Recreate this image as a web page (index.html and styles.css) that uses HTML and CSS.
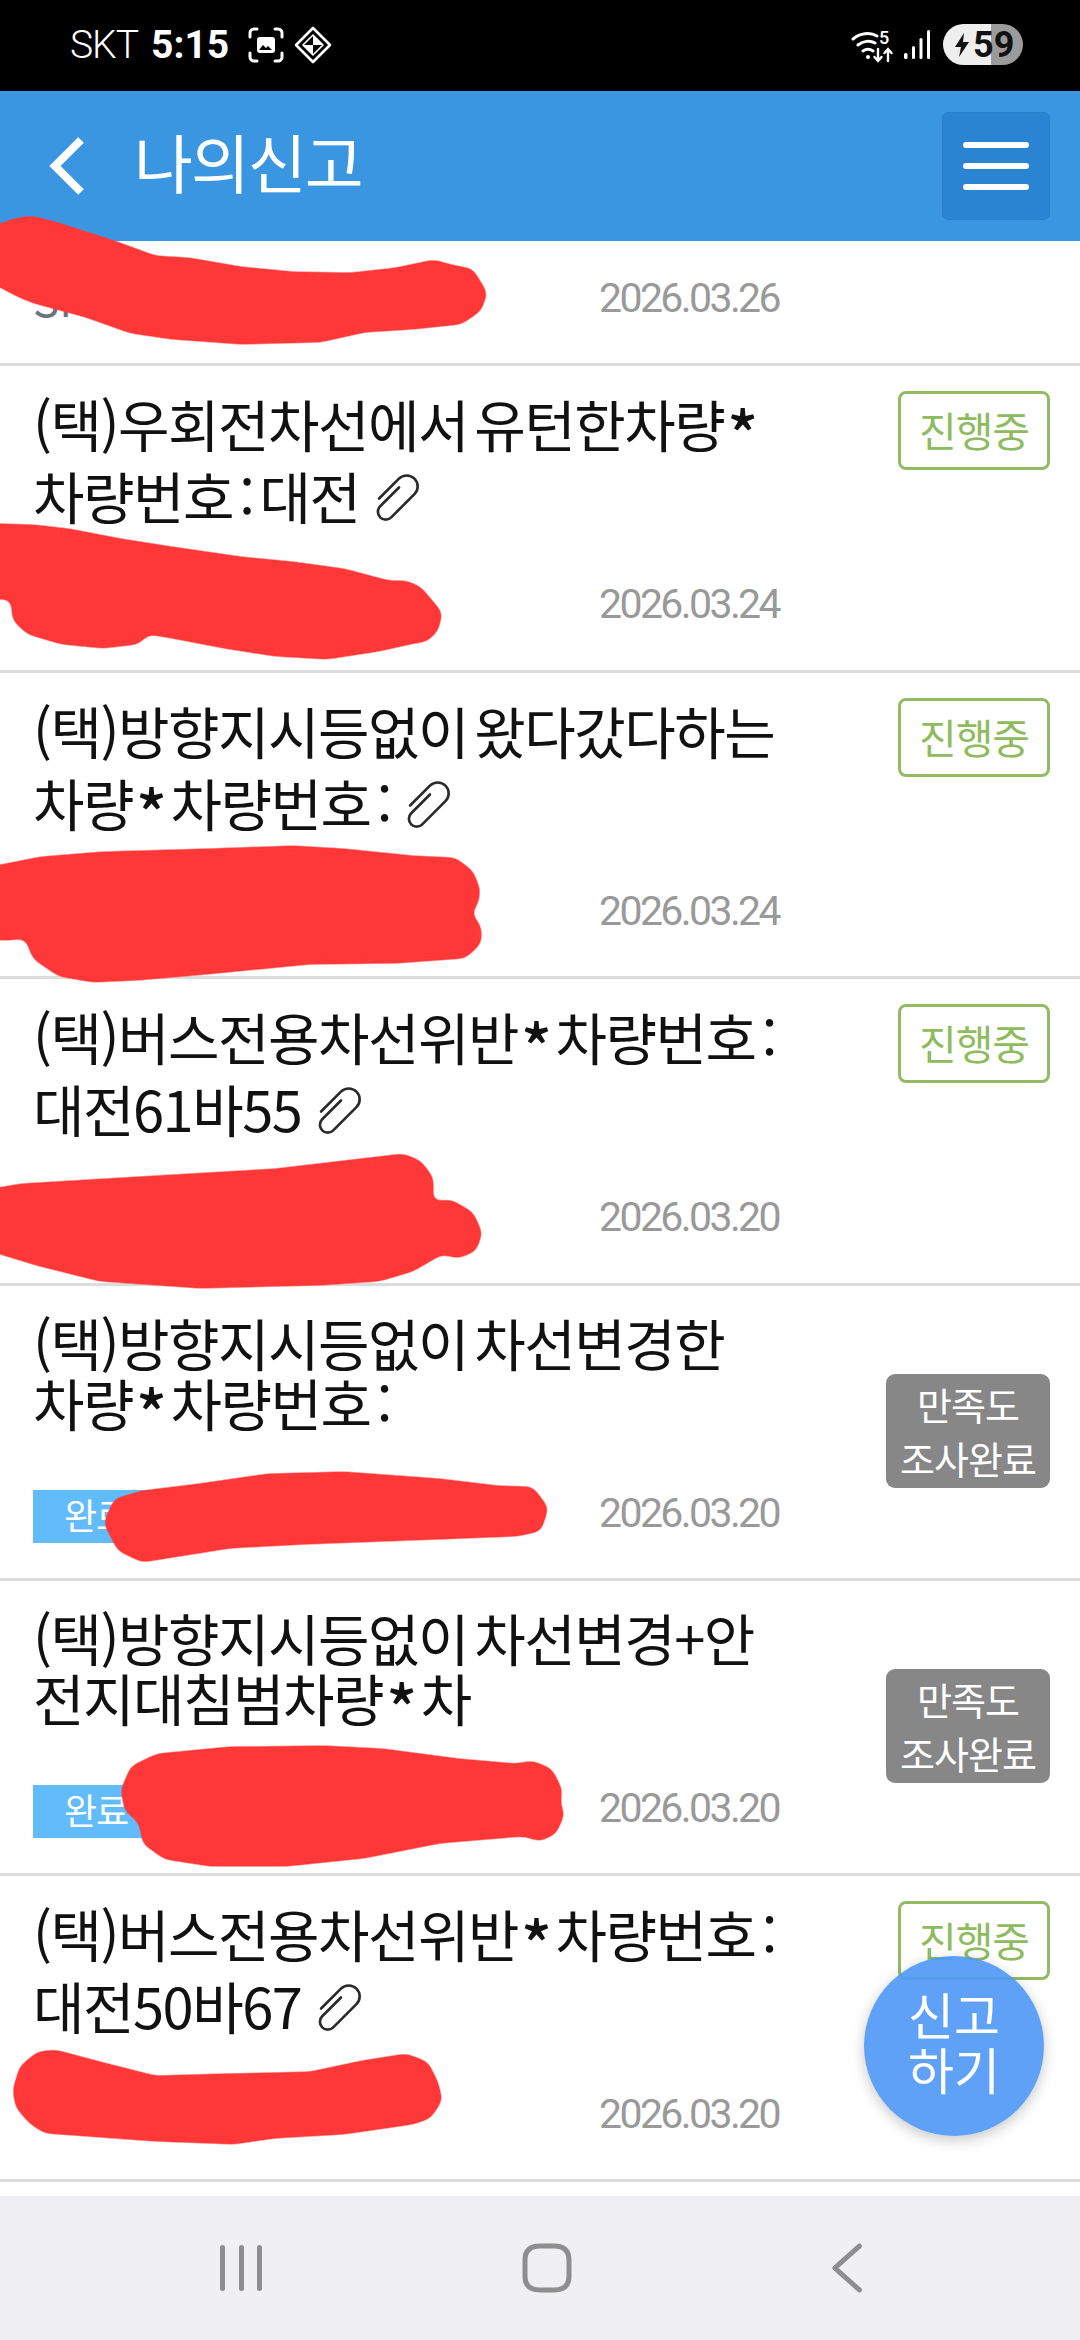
FILE: index.html
```html
<!DOCTYPE html>
<html lang="ko">
<head>
  <meta charset="UTF-8">
  <meta name="viewport" content="width=device-width, initial-scale=1.0">
  <title>나의신고</title>
  <link rel="stylesheet" href="styles.css">
</head>
<body>
  <svg class="sprite" width="0" height="0">
    <symbol id="clip" viewBox="-16 -16 32 32">
      <path transform="rotate(45)" d="M-2.5-7V10a5 5 0 0 0 10 0V-11a7 7 0 0 0-14 0V7" fill="none" stroke="#2a2a2a" stroke-width="1.7" stroke-linecap="round"/>
    </symbol>
  </svg>

  <div class="page">
    <!-- Status bar -->
    <div class="status-bar">
      <div class="status-left">
        <span class="carrier">SKT</span>
        <span class="clock">5:15</span>
        <svg class="status-icon" width="36" height="36" viewBox="0 0 36 36" fill="none" stroke="#fff" stroke-width="3" stroke-linecap="round">
          <path d="M2 10V6a4 4 0 0 1 4-4h3M27 2h3a4 4 0 0 1 4 4v4M34 26v4a4 4 0 0 1-4 4h-3M9 34H6a4 4 0 0 1-4-4v-4"/>
          <rect x="9" y="10" width="18" height="16" rx="3" fill="#fff" stroke="none"/>
          <path d="M11 23l4-5 3 3 2-2 4 4z" fill="#000" stroke="none"/>
        </svg>
        <svg class="status-icon" width="38" height="38" viewBox="0 0 38 38" fill="none" stroke="#fff" stroke-width="2.6" stroke-linejoin="round">
          <path d="M19 2l17 17-17 17L2 19z"/>
          <path d="M19 9l10 10-10 10L9 19z" stroke-width="1.6"/>
          <path d="M19 9v10h10zM19 29V19H9z" fill="#fff" stroke="none"/>
        </svg>
      </div>
      <div class="status-right">
        <svg class="wifi" width="44" height="36" viewBox="0 0 44 36" fill="none" stroke="#fff" stroke-width="3" stroke-linecap="round">
          <path d="M2 12c7-6 17-7 24-3M7 18c5-4 12-5 17-2M12 24c3-2 7-2 10 0"/>
          <circle cx="17" cy="30" r="2" fill="#fff" stroke="none"/>
          <path d="M27 22v12M23.500 30l3.500 4 3.500-4M37 34V22M33.500 26l3.500-4 3.500 4" stroke-width="2.400"/>
          <text x="28" y="17" class="wifi-num">5</text>
        </svg>
        <svg width="28" height="30" viewBox="0 0 28 30" fill="#fff">
          <rect x="1" y="23" width="3.500" height="6" rx="1.500"/>
          <rect x="9" y="16" width="3" height="13" rx="1.500"/>
          <rect x="16.500" y="8" width="3" height="21" rx="1.500"/>
          <rect x="24" y="0" width="3" height="29" rx="1.500"/>
        </svg>
        <div class="battery">
          <svg width="16" height="26" viewBox="0 0 16 26"><path d="M10 1L1 15h6l-2 10 10-15H9z" fill="#111"/></svg>
          <span>59</span>
        </div>
      </div>
    </div>

    <!-- Title bar -->
    <header class="app-bar">
      <svg class="back-icon" width="36" height="58" viewBox="0 0 36 58" fill="none" stroke="#fff" stroke-width="8">
        <path d="M32 3L6 29l26 26"/>
      </svg>
      <h1>나의신고</h1>
      <button class="menu-btn" type="button"><i></i><i></i><i></i></button>
    </header>

    <!-- Report list -->
    <ul class="report-list">
      <li class="report cut-off">
        <div class="report-main">
          <div class="meta">
            <span class="sub-text">SI</span>
            <span class="date">2026.03.26</span>
          </div>
        </div>
      </li>
      <li class="report attached">
        <div class="report-main">
          <p class="report-title">(택)우회전차선에서 유턴한차량<span class="star">*</span><br>차량번호 : 대전 <svg class="clip-icon"><use href="#clip"/></svg></p>
          <div class="meta"><span class="date">2026.03.24</span></div>
        </div>
        <span class="badge badge-progress">진행중</span>
      </li>
      <li class="report attached">
        <div class="report-main">
          <p class="report-title">(택)방향지시등없이 왔다갔다하는<br>차량<span class="star">*</span>차량번호 : <svg class="clip-icon"><use href="#clip"/></svg></p>
          <div class="meta"><span class="date">2026.03.24</span></div>
        </div>
        <span class="badge badge-progress">진행중</span>
      </li>
      <li class="report attached">
        <div class="report-main">
          <p class="report-title">(택)버스전용차선위반<span class="star">*</span>차량번호 :<br>대전61바55 <svg class="clip-icon"><use href="#clip"/></svg></p>
          <div class="meta"><span class="date">2026.03.20</span></div>
        </div>
        <span class="badge badge-progress">진행중</span>
      </li>
      <li class="report done">
        <div class="report-main">
          <p class="report-title">(택)방향지시등없이 차선변경한<br>차량<span class="star">*</span>차량번호 :</p>
          <div class="meta"><span class="tag">완료</span><span class="date">2026.03.20</span></div>
        </div>
        <span class="badge badge-survey">만족도<br>조사완료</span>
      </li>
      <li class="report done">
        <div class="report-main">
          <p class="report-title">(택)방향지시등없이 차선변경+안<br>전지대침범차량<span class="star">*</span>차</p>
          <div class="meta"><span class="tag">완료</span><span class="date">2026.03.20</span></div>
        </div>
        <span class="badge badge-survey">만족도<br>조사완료</span>
      </li>
      <li class="report attached">
        <div class="report-main">
          <p class="report-title">(택)버스전용차선위반<span class="star">*</span>차량번호 :<br>대전50바67 <svg class="clip-icon"><use href="#clip"/></svg></p>
          <div class="meta"><span class="date">2026.03.20</span></div>
        </div>
        <span class="badge badge-progress">진행중</span>
      </li>
    </ul>

    <!-- Android nav -->
    <nav class="nav-bar">
      <svg width="44" height="50" viewBox="0 0 44 50" fill="#8e8e8e">
        <rect x="1" y="2" width="5" height="46" rx="2.500"/>
        <rect x="20" y="2" width="5" height="46" rx="2.500"/>
        <rect x="38" y="2" width="5" height="46" rx="2.500"/>
      </svg>
      <svg width="50" height="50" viewBox="0 0 50 50" fill="none" stroke="#8e8e8e" stroke-width="5">
        <path d="M18 3h14c10 0 15 5 15 14v16c0 9-5 14-15 14H18C8 47 3 42 3 33V17C3 8 8 3 18 3z"/>
      </svg>
      <svg width="34" height="50" viewBox="0 0 34 50" fill="none" stroke="#8e8e8e" stroke-width="5" stroke-linecap="round" stroke-linejoin="round">
        <path d="M30 3L4 25l26 22" transform="matrix(.95 0 0 1 1 0)"/>
      </svg>
    </nav>

    <a class="fab">신고<br>하기</a>

    <!-- Red marker drawn over the screenshot, coordinates in the 1080 wide frame -->
    <svg class="marker" width="1080" height="2340" viewBox="0 0 1080 2340">
      <filter id="soft" filterUnits="userSpaceOnUse" x="-60" y="0" width="1200" height="2340">
        <feGaussianBlur stdDeviation="5"/>
        <feComponentTransfer>
          <feFuncA type="linear" slope="8" intercept="-3.5"/>
        </feComponentTransfer>
      </filter>
      <g fill="#fe3737" stroke="#fe3737" stroke-width="3" stroke-linejoin="round" filter="url(#soft)">
        <polygon points="-30,236 14,220 31,217 55,223 114,242 155,257 189,259 241,268 293,273 351,274 396,269 434,261 451,266 472,270 486,293 480,310 461,323 413,328 365,331 320,341 241,343 172,338 131,332 86,316 34,302 17,295 -30,270"/>
        <polygon points="-30,524 34,526 69,530 121,540 172,548 241,558 293,563 344,570 389,582 406,582 420,588 441,613 437,630 427,640 410,643 379,650 327,658 275,655 224,647 172,637 148,633 138,643 103,647 62,643 28,633 14,620 12,598 -30,598"/>
        <polygon points="-30,872 41,858 103,853 207,850 293,847 344,850 413,857 455,859 472,872 479,890 477,903 470,913 480,927 480,943 465,957 396,962 310,963 207,973 138,979 93,981 59,975 34,958 26,937 10,939 -30,938"/>
        <polygon points="-30,1194 21,1185 138,1178 275,1170 403,1155 420,1162 432,1178 432,1197 427,1203 451,1201 472,1213 481,1233 475,1250 458,1257 442,1253 413,1270 379,1280 320,1284 200,1287 100,1280 40,1265 -30,1244"/>
        <polygon points="105,1523 115,1500 142,1492 199,1485 268,1475 344,1473 440,1480 498,1487 532,1488 547,1508 540,1530 517,1535 440,1538 306,1543 230,1547 142,1561 119,1550"/>
        <polygon points="122,1790 132,1767 157,1755 230,1748 325,1747 383,1750 459,1760 517,1765 532,1762 551,1770 561,1790 559,1802 563,1815 555,1833 540,1840 524,1835 440,1842 364,1857 287,1865 210,1865 165,1858 144,1843 140,1822 126,1810"/>
        <polygon points="14,2090 21,2067 38,2053 55,2051 100,2063 155,2077 224,2075 310,2073 362,2062 406,2055 427,2063 437,2083 441,2100 430,2117 413,2123 344,2133 275,2137 234,2143 155,2140 45,2132 31,2123 17,2107"/>
      </g>
    </svg>
  </div>
</body>
</html>
```

FILE: styles.css
```css
* {
  box-sizing: border-box;
}

html,
body {
  margin: 0;
  padding: 0;
  background-color: #fff;
}

body {
  font-family: "Noto Sans CJK KR", "Noto Sans", sans-serif;
}

.sprite {
  display: block;
}

.page {
  position: relative;
  width: 1080px;
  height: 2340px;
  display: flex;
  flex-direction: column;
  overflow: hidden;
}

/* Status bar */
.status-bar {
  height: 91px;
  background-color: #000;
  color: #fff;
  display: flex;
  justify-content: space-between;
  align-items: center;
  padding: 0 57px 2px 70px;
  flex-shrink: 0;
}

.status-left,
.status-right {
  display: flex;
  align-items: center;
}

.carrier {
  font-family: Roboto, sans-serif;
  font-weight: 300;
  font-size: 39px;
  letter-spacing: -1px;
  margin-right: 13px;
}

.clock {
  font-family: Roboto, sans-serif;
  font-weight: 700;
  font-size: 39px;
  margin-right: 19px;
}

.status-icon {
  margin-right: 10px;
}

.status-right {
  gap: 10px;
}

.wifi {
  margin-right: -2px;
}

.wifi-num {
  font-family: Roboto, sans-serif;
  font-size: 18px;
  font-weight: 500;
  fill: #fff;
  stroke: none;
}

.battery {
  width: 80px;
  height: 41px;
  border-radius: 21px;
  background: linear-gradient(to right, #eeeeee 60%, #9b9b9b 60%);
  color: #111;
  display: flex;
  align-items: center;
  padding-left: 11px;
  gap: 3px;
  font-family: Roboto, sans-serif;
  font-weight: 700;
  font-size: 36px;
  margin-left: 2px;
}

/* Title bar */
.app-bar {
  height: 150px;
  background-color: #3a96e0;
  display: flex;
  align-items: center;
  padding: 0 30px 0 49px;
  flex-shrink: 0;
}

.app-bar h1 {
  margin: 0 0 12px 49px;
  font-size: 64px;
  font-weight: 400;
  line-height: 80px;
  color: #fff;
  letter-spacing: -2px;
  flex: 1;
}

.menu-btn {
  width: 108px;
  height: 108px;
  border: 1px solid #2c80cb;
  border-radius: 6px;
  background-color: #2a84d2;
  display: flex;
  flex-direction: column;
  justify-content: center;
  align-items: center;
  gap: 15px;
  padding: 0;
}

.menu-btn i {
  display: block;
  width: 66px;
  height: 6px;
  border-radius: 3px;
  background-color: #fff;
}

/* Report list */
.report-list {
  list-style: none;
  margin: 0;
  padding: 0;
  flex: 1;
}

.report {
  display: flex;
  justify-content: space-between;
  align-items: flex-start;
  border-bottom: 3px solid #dcdcdc;
  padding: 0 30px 0 33px;
}

.report-main {
  flex: 1;
}

.attached {
  height: 306.500px;
  padding-top: 21px;
}

.done {
  height: 295px;
  padding-top: 26px;
}

.cut-off {
  height: 125px;
}

.report-title {
  margin: 0;
  font-size: 56px;
  letter-spacing: -1.500px;
  word-spacing: -8px;
  color: #111;
  white-space: nowrap;
}

.attached .report-title {
  line-height: 72px;
}

.done .report-title {
  line-height: 60px;
}

.star {
  font-size: 64px;
  font-weight: 500;
  line-height: 0;
  vertical-align: -12px;
  margin: 0 5px 0 3px;
}

.clip-icon {
  width: 50px;
  height: 50px;
  margin-left: 3px;
  vertical-align: -4px;
}

.meta {
  display: flex;
  align-items: center;
  justify-content: space-between;
  width: 746px;
  height: 54px;
}

.attached .meta {
  margin-top: 46px;
  justify-content: flex-end;
}

.done .meta {
  margin-top: 58px;
}

.cut-off .meta {
  margin-top: 30px;
}

.sub-text {
  color: #6c757d;
  font-size: 44px;
}

.date {
  font-family: Roboto, sans-serif;
  font-size: 41px;
  letter-spacing: -2.600px;
  color: #999;
}

.done .date {
  position: relative;
  top: -4px;
}

.tag {
  width: 120px;
  height: 53px;
  background-color: #62bbfb;
  color: #fff;
  font-size: 36px;
  letter-spacing: -1px;
  line-height: 48px;
  padding-left: 31px;
  white-space: nowrap;
}

.badge {
  flex-shrink: 0;
  text-align: center;
  letter-spacing: -1px;
}

.badge-progress {
  width: 152px;
  height: 79px;
  margin-top: 4px;
  border: 3px solid #92bb64;
  border-radius: 8px;
  color: #8fbb5f;
  font-size: 41px;
  line-height: 70px;
}

.badge-survey {
  width: 164px;
  height: 114px;
  margin-top: 62px;
  border-radius: 9px;
  background-color: #878787;
  color: #fff;
  font-size: 38px;
  line-height: 54px;
  padding-top: 3px;
}

/* Android nav */
.nav-bar {
  height: 144px;
  background-color: #f0f0f3;
  display: flex;
  align-items: center;
  justify-content: space-between;
  padding: 0 216px 0 219px;
  flex-shrink: 0;
}

/* Floating button and marker lie over the list */
.fab {
  position: absolute;
  left: 864px;
  top: 1956px;
  width: 180px;
  height: 180px;
  border-radius: 50%;
  background-color: rgba(80, 153, 246, 0.92);
  box-shadow: 0 4px 14px rgba(0, 0, 0, 0.22);
  color: #fff;
  font-size: 50px;
  line-height: 55px;
  text-align: center;
  padding-top: 30px;
}

.marker {
  position: absolute;
  left: 0;
  top: 0;
  pointer-events: none;
}
```
